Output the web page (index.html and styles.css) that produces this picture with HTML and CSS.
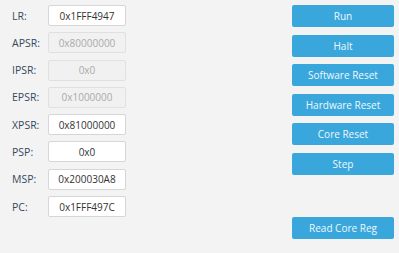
FILE: index.html
```html
<!DOCTYPE html>
<html>
<head>
<meta charset="utf-8">
<link rel="stylesheet" href="styles.css">
</head>
<body>
<div class="panel">
  <div class="regs">
    <div class="row"><span class="lbl">LR:</span><div class="val">0x1FFF4947</div></div>
    <div class="row"><span class="lbl">APSR:</span><div class="val dis">0x80000000</div></div>
    <div class="row"><span class="lbl">IPSR:</span><div class="val dis">0x0</div></div>
    <div class="row"><span class="lbl">EPSR:</span><div class="val dis">0x1000000</div></div>
    <div class="row"><span class="lbl">XPSR:</span><div class="val">0x81000000</div></div>
    <div class="row"><span class="lbl">PSP:</span><div class="val">0x0</div></div>
    <div class="row"><span class="lbl">MSP:</span><div class="val">0x200030A8</div></div>
    <div class="row"><span class="lbl">PC:</span><div class="val">0x1FFF497C</div></div>
  </div>
  <div class="actions">
    <button class="btn">Run</button>
    <button class="btn">Halt</button>
    <button class="btn">Software Reset</button>
    <button class="btn">Hardware Reset</button>
    <button class="btn">Core Reset</button>
    <button class="btn">Step</button>
    <button class="btn last">Read Core Reg</button>
  </div>
</div>
</body>
</html>
```

FILE: styles.css
```css
html, body {
  margin: 0;
  padding: 0;
  background: #f3f3f3;
}
body {
  width: 399px;
  height: 253px;
  overflow: hidden;
  font-family: "Open Sans", "Noto Sans", sans-serif;
}
.panel {
  display: flex;
  justify-content: space-between;
  height: 253px;
  box-sizing: border-box;
}
.regs {
  display: flex;
  flex-direction: column;
  gap: 6.3px;
  padding: 5px 0 0 12px;
}
.row {
  display: flex;
  align-items: center;
}
.lbl {
  width: 36px;
  font-size: 10.5px;
  color: #34495e;
}
.val {
  box-sizing: border-box;
  width: 78px;
  height: 21px;
  border: 1px solid #d6d6d6;
  border-radius: 2px;
  background: #ffffff;
  font-size: 10px;
  color: #333;
  display: flex;
  align-items: center;
  justify-content: center;
}
.val.dis {
  background: #f1f1f1;
  border-color: #e0e0e0;
  color: #aaaaaa;
}
.actions {
  display: flex;
  flex-direction: column;
  gap: 7.5px;
  padding: 5px 5px 14px 0;
  width: 102px;
}
.btn {
  height: 22px;
  border: none;
  border-radius: 2px;
  background: #3aa7dc;
  color: #eef8fd;
  font-family: "Open Sans", "Noto Sans", sans-serif;
  font-size: 10px;
  padding: 0;
}
.btn.last {
  margin-top: auto;
}
```
